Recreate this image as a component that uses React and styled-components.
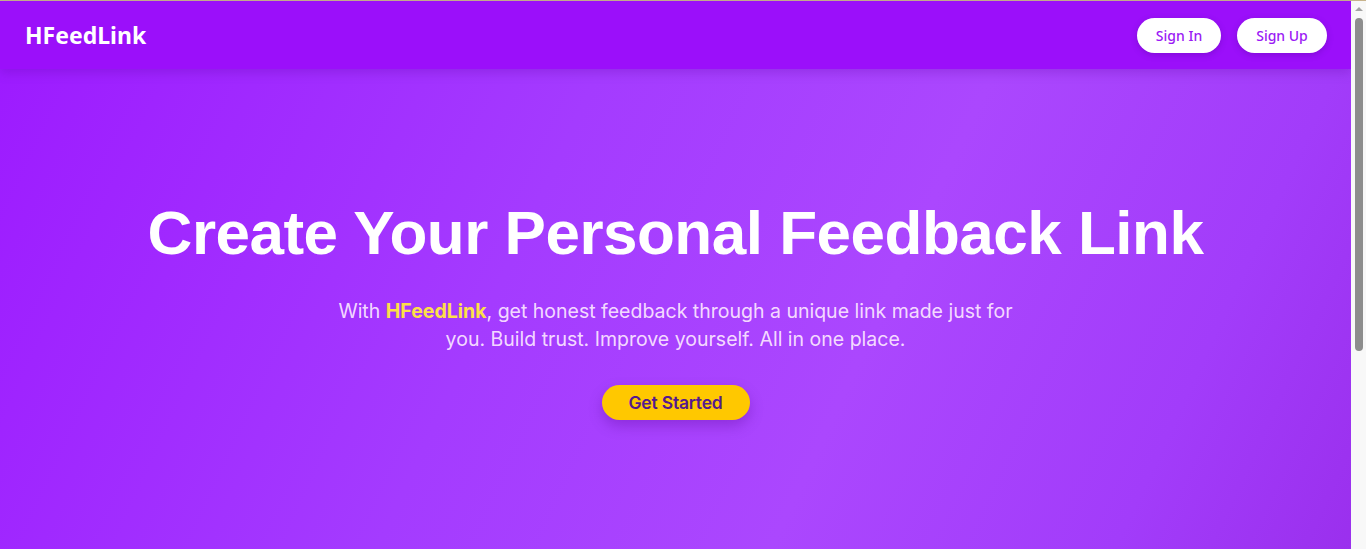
import React from "react";
import styled, { createGlobalStyle } from "styled-components";

const Global = createGlobalStyle`
  html, body { margin: 0; padding: 0; }
  body {
    font-family: "Inter", "Liberation Sans", sans-serif;
    background: #ffffff;
    margin-right: 15px;
  }
  * { box-sizing: border-box; }
`;

const Page = styled.div`
  display: flex;
  flex-direction: column;
  min-height: 850px;
  border-top: 1px solid #c8b38c;
`;

const Header = styled.header`
  position: relative;
  z-index: 2;
  height: 68px;
  display: flex;
  align-items: center;
  justify-content: space-between;
  padding: 0 24px 0 25px;
  background: #9b0ffa;
  box-shadow: 0 4px 10px rgba(90, 0, 160, 0.25);
`;

const Logo = styled.div`
  font-family: "Noto Sans", "Open Sans", sans-serif;
  font-weight: 700;
  font-size: 23px;
  color: #ffffff;
`;

const Nav = styled.nav`
  display: flex;
  gap: 16px;
`;

const NavButton = styled.button`
  height: 35px;
  width: ${(p) => p.$w}px;
  border: none;
  border-radius: 999px;
  background: #ffffff;
  color: #9b19f5;
  font-family: "Noto Sans", "Open Sans", sans-serif;
  font-weight: 500;
  font-size: 14px;
  box-shadow: 0 2px 6px rgba(60, 0, 120, 0.25);
  cursor: pointer;
`;

const Hero = styled.main`
  flex: 1;
  display: flex;
  flex-direction: column;
  align-items: center;
  padding-top: 128px;
  background: linear-gradient(115deg, #9d1bff 0%, #a43bff 35%, #ab47fe 58%, #a23cfa 78%, #9628e6 100%);
  text-align: center;
`;

const Title = styled.h1`
  margin: 0;
  font-family: "Liberation Sans", "Inter", sans-serif;
  font-weight: 700;
  font-size: 62px;
  line-height: 72px;
  color: #ffffff;
  letter-spacing: -0.5px;
`;

const Sub = styled.p`
  margin: 28px 0 0;
  max-width: 690px;
  font-family: "Inter", "Liberation Sans", sans-serif;
  font-size: 19.5px;
  line-height: 28px;
  color: rgba(255, 238, 255, 0.9);
`;

const Brand = styled.span`
  color: #fde047;
  font-weight: 700;
`;

const Cta = styled.button`
  margin-top: 32px;
  width: 148px;
  height: 35px;
  border: none;
  border-radius: 999px;
  background: #ffc800;
  color: #55198f;
  font-family: "Inter", "Liberation Sans", sans-serif;
  font-weight: 600;
  font-size: 17.5px;
  letter-spacing: -0.2px;
  box-shadow: 0 6px 14px rgba(80, 0, 140, 0.3);
  cursor: pointer;
`;

const ScrollRail = styled.div`
  position: fixed;
  top: 0;
  right: 0;
  width: 15px;
  height: 100vh;
  background: #f8f8f8;
  border-top: 1px solid #c8b38c;
  display: flex;
  flex-direction: column;
  align-items: center;
`;

const ScrollArrow = styled.div`
  margin-top: 6px;
  width: 0;
  height: 0;
  border-left: 4px solid transparent;
  border-right: 4px solid transparent;
  border-bottom: 4px solid #a3a3a3;
`;

const ScrollThumb = styled.div`
  margin-top: 7px;
  width: 8px;
  height: 333px;
  border-radius: 4px;
  background: #8d8d8d;
`;

export default function App() {
  return (
    <>
      <Global />
      <Page>
        <Header>
          <Logo>HFeedLink</Logo>
          <Nav>
            <NavButton $w={84}>Sign In</NavButton>
            <NavButton $w={90}>Sign Up</NavButton>
          </Nav>
        </Header>
        <Hero>
          <Title>Create Your Personal Feedback Link</Title>
          <Sub>
            With <Brand>HFeedLink</Brand>, get honest feedback through a unique link made just for you. Build trust. Improve yourself. All in one place.
          </Sub>
          <Cta>Get Started</Cta>
        </Hero>
      </Page>
      <ScrollRail aria-hidden="true">
        <ScrollArrow />
        <ScrollThumb />
      </ScrollRail>
    </>
  );
}
